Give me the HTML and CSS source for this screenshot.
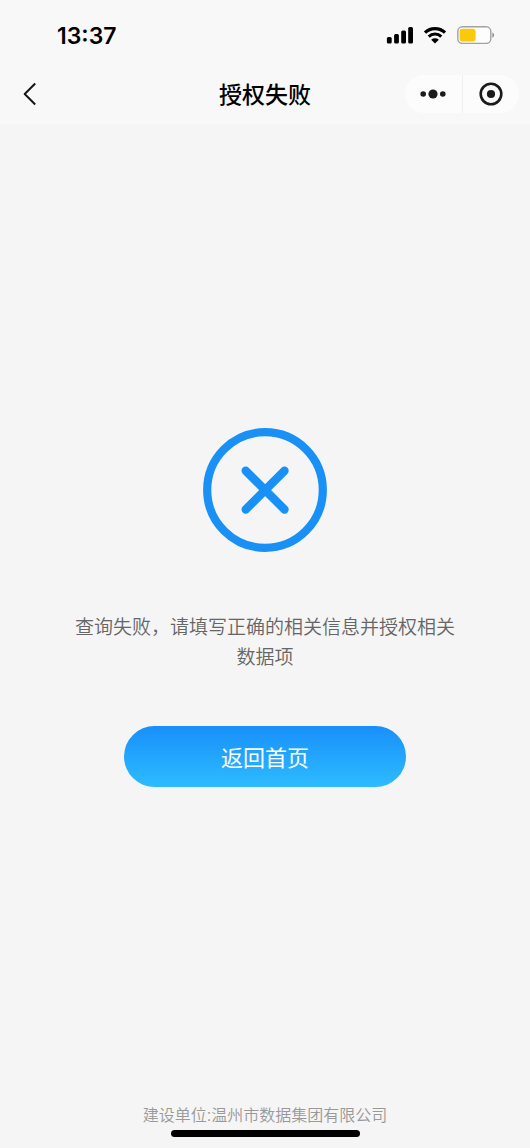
FILE: index.html
```html
<!DOCTYPE html>
<html lang="zh-CN">
<head>
<meta charset="utf-8">
<meta name="viewport" content="width=device-width, initial-scale=1">
<title>授权失败</title>
<link rel="stylesheet" href="styles.css">
</head>
<body>
<header class="top">
  <div class="status">
    <time class="clock">13:37</time>
    <div class="indicators">
      <svg width="27" height="18" viewBox="0 0 27 18" aria-hidden="true">
        <rect x="0.9" y="11" width="4.8" height="6.4" rx="1.5"/>
        <rect x="8.1" y="8" width="4.8" height="9.4" rx="1.5"/>
        <rect x="15.2" y="4.5" width="4.8" height="12.9" rx="1.5"/>
        <rect x="22.2" y="1" width="4.8" height="16.4" rx="1.5"/>
      </svg>
      <svg width="24" height="18" viewBox="0 0 24 18" aria-hidden="true">
        <path d="M2 6.6a14.5 14.5 0 0 1 20 0" fill="none" stroke="#000" stroke-width="3.3"/>
        <path d="M5.7 10.6a9.2 9.2 0 0 1 12.6 0" fill="none" stroke="#000" stroke-width="3"/>
        <path d="M8.2 13.7a5.6 5.6 0 0 1 7.6 0L12 17.6z"/>
      </svg>
      <svg width="38" height="18" viewBox="0 0 38 18" aria-hidden="true">
        <rect x=".8" y=".8" width="33" height="16.6" rx="4.6" fill="#fdfdfd" stroke="#a2a2a2" stroke-width="1.4"/>
        <rect x="2.6" y="2.8" width="16" height="12.6" rx="2.8" fill="#fbc90c"/>
        <path d="M35.4 6.5c2.2.9 2.2 4.3 0 5.2z" fill="#8c8c8c"/>
      </svg>
    </div>
  </div>
  <nav class="nav">
    <button class="back" type="button" aria-label="返回">
      <svg width="14" height="24" viewBox="0 0 14 24" aria-hidden="true"><path d="M12.2 1.5 1.7 12l10.5 10.5" fill="none" stroke="#181818" stroke-width="2" stroke-linejoin="round"/></svg>
    </button>
    <h1 class="title">授权失败</h1>
    <div class="capsule">
      <button class="capsule-button" type="button" aria-label="更多">
        <svg width="26" height="24" viewBox="0 0 26 24" fill="#1b1b1b" aria-hidden="true"><circle cx="3.2" cy="12" r="2.8"/><circle cx="13" cy="12" r="4.6"/><circle cx="22.8" cy="12" r="2.8"/></svg>
      </button>
      <button class="capsule-button" type="button" aria-label="关闭">
        <svg width="24" height="24" viewBox="0 0 24 24" aria-hidden="true"><circle cx="12" cy="12" r="10.3" fill="none" stroke="#1b1b1b" stroke-width="2.6"/><circle cx="12" cy="12" r="4.1" fill="#1b1b1b"/></svg>
      </button>
    </div>
  </nav>
</header>
<main class="result">
  <svg width="124" height="124" viewBox="0 0 124 124" fill="none" stroke="#1990f5" aria-hidden="true">
    <circle cx="62" cy="62" r="57.8" stroke-width="8.2"/>
    <path d="M42.7 42.7 81.5 81.5M81.5 42.7 42.7 81.5" stroke-width="8.4" stroke-linecap="round"/>
  </svg>
  <p class="message">查询失败，请填写正确的相关信息并授权相关数据项</p>
  <button class="home" type="button">返回首页</button>
</main>
<footer class="footer">
  <p class="builder">建设单位:温州市数据集团有限公司</p>
  <div class="home-indicator"></div>
</footer>
</body>
</html>
```
FILE: styles.css
```css
* {
  box-sizing: border-box;
}

body {
  display: flex;
  flex-direction: column;
  min-height: 100vh;
  margin: 0;
  background: #f5f5f5;
  color: #000;
  font-family: "Liberation Sans", "Noto Sans CJK SC", sans-serif;
}

button {
  display: flex;
  align-items: center;
  justify-content: center;
  padding: 0;
  border: 0;
  background: none;
  font-family: inherit;
  cursor: pointer;
}

svg {
  display: block;
  flex: none;
}

.top {
  background: #f8f8f8;
}

.status {
  display: flex;
  align-items: center;
  justify-content: space-between;
  height: 64px;
  padding: 6px 35px 0 57px;
}

.clock {
  padding-top: 1px;
  font-family: Inter, sans-serif;
  font-size: 23px;
  font-weight: 600;
  line-height: 28px;
}

.indicators {
  display: flex;
  align-items: center;
  gap: 10px;
}

.nav {
  display: grid;
  grid-template-columns: 1fr auto 1fr;
  align-items: center;
  height: 60px;
  padding: 0 11px 0 18px;
}

.back {
  width: 24px;
  height: 40px;
}

.title {
  margin: 0;
  padding: 2px 7px 0 0;
  font-size: 23px;
  font-weight: 500;
  line-height: 32px;
}

.capsule {
  display: flex;
  justify-self: end;
  width: 114px;
  height: 38px;
  border-radius: 19px;
  background: #fcfcfc;
}

.capsule-button {
  flex: 1;
}

.capsule-button + .capsule-button {
  border-left: 1px solid #f0f0f0;
}

.result {
  display: flex;
  flex: 1;
  flex-direction: column;
  align-items: center;
  justify-content: center;
  padding: 0 72px 14px;
}

.message {
  margin: 61px 0 53px;
  color: #666;
  font-size: 19px;
  font-weight: 350;
  line-height: 30px;
  text-align: center;
}

.home {
  width: 73%;
  height: 61px;
  border-radius: 31px;
  background: linear-gradient(#188ffa, #2dbcff);
  color: #fff;
  font-size: 22px;
}

.footer {
  display: flex;
  flex-direction: column;
  align-items: center;
  padding-bottom: 11px;
}

.builder {
  margin: 0;
  color: #999;
  font-size: 16px;
  font-weight: 350;
  line-height: 24px;
}

.home-indicator {
  width: 189px;
  height: 7px;
  margin-top: 2px;
  border-radius: 4px;
  background: #000;
}
```
